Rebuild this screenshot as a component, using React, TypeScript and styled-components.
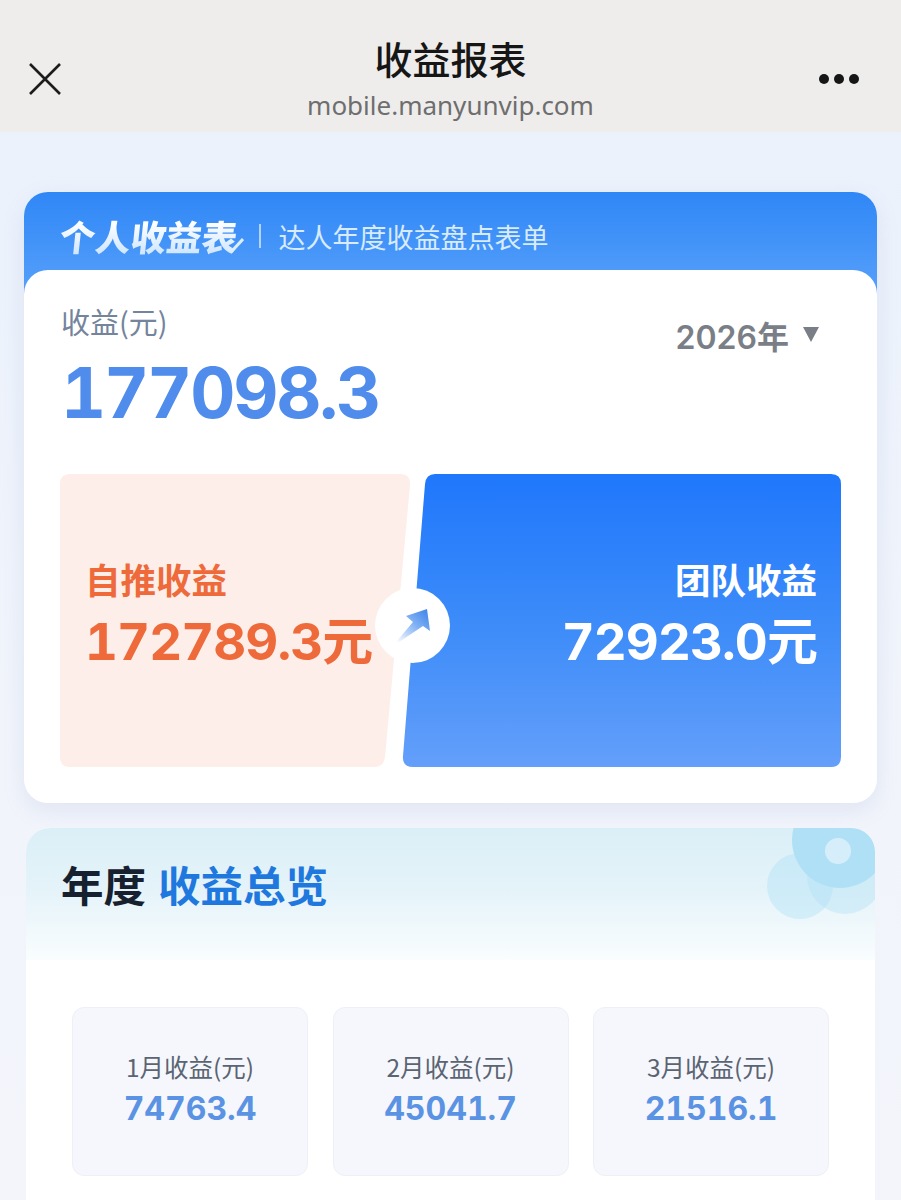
import React from 'react';
import styled, { createGlobalStyle } from 'styled-components';

const cjk = '"Noto Sans CJK SC", sans-serif';
const num = 'Inter, "Noto Sans CJK SC", sans-serif';

const GlobalStyle = createGlobalStyle`
  html, body {
    margin: 0;
    padding: 0;
    background: #ebf2fc;
  }
  * {
    box-sizing: border-box;
  }
`;

const Page = styled.div`
  width: 901px;
  height: 1200px;
  overflow: hidden;
  background: linear-gradient(180deg, #e9f1fc 0%, #f1f4fb 60%, #f3f5fb 100%);
  font-family: ${cjk};
`;

const TopBar = styled.header`
  height: 132px;
  background: #eeedec;
  display: grid;
  grid-template-columns: 90px 1fr 90px;
  align-items: center;
`;

const CloseBtn = styled.div`
  display: flex;
  padding: 26px 0 0 28px;
`;

const TitleBlock = styled.div`
  display: flex;
  flex-direction: column;
  align-items: center;
  padding-top: 22px;
`;

const Title = styled.div`
  font-size: 38px;
  line-height: 54px;
  font-weight: 500;
  color: #161616;
`;

const Url = styled.div`
  font-family: "Noto Sans", sans-serif;
  font-size: 26px;
  line-height: 36px;
  color: #6e6e6e;
  margin-top: 2px;
`;

const MoreBtn = styled.div`
  display: flex;
  justify-content: flex-end;
  gap: 5px;
  padding: 26px 42px 0 0;
`;

const Dot = styled.span`
  width: 10px;
  height: 10px;
  border-radius: 50%;
  background: #161616;
`;

const Content = styled.main`
  padding: 60px 24px 0;
`;

const SummaryCard = styled.section`
  height: 611px;
  border-radius: 24px;
  background: linear-gradient(180deg, #2f87f6 0%, #5aa2fb 100%) top / 100% 110px no-repeat;
  box-shadow: 0 8px 22px rgba(120, 140, 190, 0.14);
`;

const BannerRow = styled.div`
  height: 78px;
  display: flex;
  align-items: center;
  padding: 10px 0 0 36px;
`;

const BrandWrap = styled.div`
  position: relative;
  display: flex;
  width: 182px;
`;

const BrandName = styled.div`
  font-size: 35.5px;
  line-height: 44px;
  font-weight: 900;
  white-space: nowrap;
  transform: skewX(-6deg);
  background: linear-gradient(180deg, #ffffff 20%, #c9e3ff 100%);
  -webkit-background-clip: text;
  background-clip: text;
  color: transparent;
`;

const BrandTick = styled.svg`
  position: absolute;
  right: -2px;
  bottom: 5px;
`;

const BannerDivider = styled.span`
  width: 1.5px;
  height: 24px;
  background: rgba(255, 255, 255, 0.6);
  margin: 0 18px 0 17px;
`;

const BannerText = styled.div`
  font-size: 27px;
  color: #d8ebff;
`;

const WhitePanel = styled.div`
  height: 533px;
  background: #fff;
  border-radius: 24px;
  padding: 30px 36px 36px;
`;

const EarningsHead = styled.div`
  display: flex;
  justify-content: space-between;
  align-items: flex-start;
  height: 174px;
`;

const EarningsLabel = styled.div`
  font-size: 29px;
  line-height: 42px;
  color: #74849c;
  margin-left: 1px;
`;

const EarningsValue = styled.div`
  font-family: ${num};
  font-variant-numeric: tabular-nums;
  font-size: 70px;
  line-height: 88px;
  font-weight: 700;
  letter-spacing: -2.2px;
  color: #4f8cec;
  margin: 7px 0 0 1px;
`;

const YearPicker = styled.div`
  display: flex;
  align-items: center;
  gap: 14px;
  font-family: ${num};
  font-size: 32px;
  font-weight: 600;
  color: #7a7f87;
  margin: 12px 22px 0 0;
`;

const Caret = styled.span`
  width: 0;
  height: 0;
  border-left: 8.5px solid transparent;
  border-right: 8.5px solid transparent;
  border-top: 15px solid #7a7f87;
  margin-bottom: 2px;
`;

const SplitRow = styled.div`
  position: relative;
  height: 293px;
  display: flex;
  width: 781px;
`;

const SelfPanel = styled.div`
  flex: none;
  width: 351px;
  height: 293px;
  background: #fdeee9;
  clip-path: path('M10 0 H340 Q351 0 350 11 L325 283 Q324 293 314 293 H10 Q0 293 0 283 V10 Q0 0 10 0 Z');
  padding: 77px 0 0 25px;
  color: #ee6a3b;
`;

const TeamPanel = styled.div`
  flex: none;
  width: 439px;
  height: 293px;
  margin-left: -9px;
  background: linear-gradient(180deg, #1f77fb 0%, #3f8df9 55%, #649ffa 100%);
  clip-path: path('M33 0 H429 Q439 0 439 10 V283 Q439 293 429 293 H11 Q0 293 1 282 L23 10 Q24 0 33 0 Z');
  padding: 77px 24px 0 0;
  color: #fff;
  text-align: right;
`;

const SplitLabel = styled.div`
  font-size: 35.5px;
  line-height: 56px;
  font-weight: 700;
`;

const SplitValue = styled.div`
  font-family: ${num};
  font-variant-numeric: tabular-nums;
  font-size: 51px;
  line-height: 68px;
  font-weight: 700;
  letter-spacing: -0.9px;
  white-space: nowrap;
  margin-top: 1px;
`;

const ArrowBadge = styled.div`
  position: absolute;
  left: 315px;
  top: 114px;
  width: 75px;
  height: 75px;
  border-radius: 50%;
  background: #fff;
  display: flex;
  align-items: center;
  justify-content: center;
`;

const OverviewCard = styled.section`
  margin: 25px 2px 0;
  height: 400px;
  background: #fff;
  border-radius: 24px 24px 0 0;
`;

const OverviewHead = styled.div`
  position: relative;
  overflow: hidden;
  height: 132px;
  border-radius: 24px 24px 0 0;
  background: linear-gradient(180deg, #dbeff7 0%, #e4f3f9 45%, #f9fdfe 100%);
  padding: 26px 0 0 35px;
  display: flex;
  gap: 12px;
  align-items: flex-start;
`;

const HeadText = styled.h2<{ $accent?: boolean }>`
  position: relative;
  margin: 0;
  font-size: 42.5px;
  line-height: 60px;
  font-weight: 700;
  color: ${(p) => (p.$accent ? '#1f78de' : '#17202e')};
`;

const Bubble = styled.span<{ $size: number; $x: number; $y: number; $color: string }>`
  position: absolute;
  width: ${(p) => p.$size}px;
  height: ${(p) => p.$size}px;
  right: ${(p) => p.$x}px;
  top: ${(p) => p.$y}px;
  border-radius: 50%;
  background: ${(p) => p.$color};
`;

const MonthGrid = styled.div`
  display: grid;
  grid-template-columns: repeat(3, 236px);
  gap: 24.5px;
  padding: 47px 0 0 46px;
`;

const MonthCard = styled.div`
  height: 169px;
  border-radius: 12px;
  background: #f6f7fc;
  border: 1px solid #eef0f7;
  display: flex;
  flex-direction: column;
  align-items: center;
  padding-top: 41px;
`;

const MonthLabel = styled.div`
  font-size: 24.5px;
  line-height: 36px;
  color: #5a6472;
`;

const MonthValue = styled.div`
  font-family: ${num};
  font-variant-numeric: tabular-nums;
  font-size: 32px;
  line-height: 42px;
  font-weight: 700;
  color: #5a93e3;
  margin-top: 3px;
`;

const months = [
  { label: '1月收益(元)', value: '74763.4' },
  { label: '2月收益(元)', value: '45041.7' },
  { label: '3月收益(元)', value: '21516.1' },
];

export default function App() {
  return (
    <Page>
      <GlobalStyle />
      <TopBar>
        <CloseBtn>
          <svg width="34" height="34" viewBox="0 0 34 34" fill="none" stroke="#1c1c1c" strokeWidth="2.6">
            <path d="M2 2 L32 32 M32 2 L2 32" />
          </svg>
        </CloseBtn>
        <TitleBlock>
          <Title>收益报表</Title>
          <Url>mobile.manyunvip.com</Url>
        </TitleBlock>
        <MoreBtn>
          <Dot />
          <Dot />
          <Dot />
        </MoreBtn>
      </TopBar>
      <Content>
        <SummaryCard>
          <BannerRow>
            <BrandWrap>
              <BrandName>个人收益表</BrandName>
              <BrandTick width="20" height="16" viewBox="0 0 20 16" fill="none" stroke="#dcedff" strokeWidth="3">
                <path d="M2 9 L8 14 L19 2" />
              </BrandTick>
            </BrandWrap>
            <BannerDivider />
            <BannerText>达人年度收益盘点表单</BannerText>
          </BannerRow>
          <WhitePanel>
            <EarningsHead>
              <div>
                <EarningsLabel>收益(元)</EarningsLabel>
                <EarningsValue>177098.3</EarningsValue>
              </div>
              <YearPicker>
                2026年
                <Caret />
              </YearPicker>
            </EarningsHead>
            <SplitRow>
              <SelfPanel>
                <SplitLabel>自推收益</SplitLabel>
                <SplitValue>172789.3元</SplitValue>
              </SelfPanel>
              <TeamPanel>
                <SplitLabel>团队收益</SplitLabel>
                <SplitValue>72923.0元</SplitValue>
              </TeamPanel>
              <ArrowBadge>
                <svg width="36" height="36" viewBox="0 0 36 36">
                  <defs>
                    <linearGradient id="arrowFill" x1="0" y1="1" x2="1" y2="0">
                      <stop offset="0" stopColor="#ffffff" />
                      <stop offset="0.55" stopColor="#7fb0f4" />
                      <stop offset="1" stopColor="#3b80ea" />
                    </linearGradient>
                  </defs>
                  <path d="M11 8 L32 1 L35 23 L28 18 L4 34 L1 34 L18 14 Z" fill="url(#arrowFill)" />
                </svg>
              </ArrowBadge>
            </SplitRow>
          </WhitePanel>
        </SummaryCard>
        <OverviewCard>
          <OverviewHead>
            <Bubble $size={66} $x={42} $y={25} $color="rgba(178, 226, 246, 0.45)" />
            <Bubble $size={76} $x={-8} $y={10} $color="rgba(178, 226, 246, 0.4)" />
            <Bubble $size={96} $x={-13} $y={-36} $color="#b0e0f6" />
            <Bubble $size={26} $x={24} $y={10} $color="#d6eefa" />
            <HeadText>年度</HeadText>
            <HeadText $accent>收益总览</HeadText>
          </OverviewHead>
          <MonthGrid>
            {months.map((m) => (
              <MonthCard key={m.label}>
                <MonthLabel>{m.label}</MonthLabel>
                <MonthValue>{m.value}</MonthValue>
              </MonthCard>
            ))}
          </MonthGrid>
        </OverviewCard>
      </Content>
    </Page>
  );
}
